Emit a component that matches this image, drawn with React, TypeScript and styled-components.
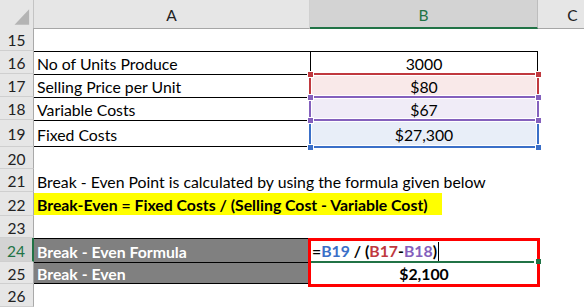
import styled, { createGlobalStyle } from 'styled-components'

const green = '#217346'
const cols = '34px 276px 228px 70px'

function App() {
  return (
    <>
      <Global />
      <Sheet>
        <Row $h={28}>
          <Corner>
            <svg width="34" height="28" viewBox="0 0 34 28">
              <polygon points="30,9 30,25 15,25" fill="#b4b4b4" />
            </svg>
          </Corner>
          <ColHead>A</ColHead>
          <ColHead $active>B</ColHead>
          <ColHead>C</ColHead>
        </Row>

        <Row $h={23}>
          <RowHead>15</RowHead>
          <Cell />
          <Cell />
          <Cell />
        </Row>

        <Row $h={23}>
          <RowHead>16</RowHead>
          <Cell $top>No of Units Produce</Cell>
          <Cell $top $left $right $center>3000</Cell>
          <Cell />
        </Row>

        <Row $h={23}>
          <RowHead>17</RowHead>
          <Cell $top>Selling Price per Unit</Cell>
          <Cell $center>
            <RefBox $color="#c0393f" $tint="#f9e9e9" $z={1}>
              <Handle $pos="tl" $color="#c0393f" />
              <Handle $pos="tr" $color="#c0393f" />
            </RefBox>
            <CellText>$80</CellText>
          </Cell>
          <Cell />
        </Row>

        <Row $h={23}>
          <RowHead>18</RowHead>
          <Cell $top>Variable Costs</Cell>
          <Cell $center>
            <RefBox $color="#8460bd" $tint="#f0ecf7" $z={3}>
              <Handle $pos="tl" $color="#8460bd" />
              <Handle $pos="tr" $color="#8460bd" />
              <Handle $pos="bl" $color="#8460bd" />
              <Handle $pos="br" $color="#8460bd" />
            </RefBox>
            <CellText>$67</CellText>
          </Cell>
          <Cell />
        </Row>

        <Row $h={27}>
          <RowHead>19</RowHead>
          <Cell $top $bottom>Fixed Costs</Cell>
          <Cell $center>
            <RefBox $color="#3a6fc8" $tint="#e8eef8" $z={2}>
              <Handle $pos="bl" $color="#3a6fc8" />
              <Handle $pos="br" $color="#3a6fc8" />
            </RefBox>
            <CellText>$27,300</CellText>
          </Cell>
          <Cell />
        </Row>

        <Row $h={22}>
          <RowHead>20</RowHead>
          <Cell />
          <Cell />
          <Cell />
        </Row>

        <Row $h={23}>
          <RowHead>21</RowHead>
          <Cell>Break - Even Point is calculated by using the formula given below</Cell>
          <Cell />
          <Cell />
        </Row>

        <Row $h={24}>
          <RowHead>22</RowHead>
          <Cell $flush>
            <Highlight>Break-Even = Fixed Costs / (Selling Cost - Variable Cost)</Highlight>
          </Cell>
          <Cell />
          <Cell />
        </Row>

        <Row $h={22}>
          <RowHead>23</RowHead>
          <Cell />
          <Cell />
          <Cell />
        </Row>

        <Row $h={24}>
          <RowHead $active>24</RowHead>
          <Cell $top $fill="#808080" $light $bold>Break - Even Formula</Cell>
          <Cell $bold>
            <Formula>
              =<Ref $color="#3a6fc8">B19</Ref> / (<Ref $color="#c0393f">B17</Ref>-<Ref $color="#8460bd">B18</Ref>)
              <Caret />
            </Formula>
            <ActiveEdge />
            <FillHandle />
            <Outline />
          </Cell>
          <Cell />
        </Row>

        <Row $h={22}>
          <RowHead>25</RowHead>
          <Cell $top $bottom $fill="#808080" $light $bold>Break - Even</Cell>
          <Cell $center $bold>$2,100</Cell>
          <Cell />
        </Row>

        <Row $h={23}>
          <RowHead>26</RowHead>
          <Cell />
          <Cell />
          <Cell />
        </Row>
      </Sheet>
    </>
  )
}

const Global = createGlobalStyle`
  html, body { margin: 0; padding: 0; background: #fff; overflow: hidden; }
  * { box-sizing: border-box; }
`

const Sheet = styled.div`
  display: flex;
  flex-direction: column;
  width: 584px;
  height: 307px;
  overflow: hidden;
  font-family: Lato, "Liberation Sans", sans-serif;
  font-size: 15.8px;
  color: #000;
`
const Row = styled.div<{ $h: number }>`
  display: grid;
  grid-template-columns: ${cols};
  height: ${p => p.$h}px;
  flex: none;
`
const Corner = styled.div`
  background: #e6e6e6;
  border-right: 1px solid #c4c4c4;
  border-bottom: 1px solid #a6a6a6;
  display: flex;
`
const ColHead = styled.div<{ $active?: boolean }>`
  display: flex;
  align-items: center;
  justify-content: center;
  padding-top: 2px;
  background: ${p => p.$active ? '#d3d3d3' : '#e6e6e6'};
  color: ${p => p.$active ? green : '#222'};
  border-right: 1px solid ${p => p.$active ? '#bdbdbd' : '#d0d0d0'};
  border-bottom: ${p => p.$active ? `2px solid ${green}` : '1px solid #a6a6a6'};
  font-size: 15.5px;
`
const RowHead = styled.div<{ $active?: boolean }>`
  display: flex;
  align-items: center;
  justify-content: center;
  padding-top: 2px;
  background: ${p => p.$active ? '#d3d3d3' : '#e6e6e6'};
  color: ${p => p.$active ? green : '#222'};
  border-right: ${p => p.$active ? `2px solid ${green}` : '1px solid #a9a9a9'};
  border-bottom: 1px solid #cfcfcf;
  font-size: 15.5px;
`
const Cell = styled.div<{
  $top?: boolean
  $bottom?: boolean
  $left?: boolean
  $right?: boolean
  $center?: boolean
  $bold?: boolean
  $light?: boolean
  $flush?: boolean
  $fill?: string
}>`
  position: relative;
  display: flex;
  justify-content: ${p => p.$center ? 'center' : 'flex-start'};
  padding: ${p => p.$flush ? '0' : '2px 3px 0'};
  align-items: ${p => p.$flush ? 'flex-end' : 'center'};
  border-top: ${p => p.$top ? '1px solid #000' : 'none'};
  border-bottom: ${p => p.$bottom ? '1px solid #000' : 'none'};
  border-left: ${p => p.$left ? '1px solid #000' : 'none'};
  border-right: ${p => p.$right ? '1px solid #000' : 'none'};
  background: ${p => p.$fill || 'transparent'};
  color: ${p => p.$light ? '#fff' : '#000'};
  font-weight: ${p => p.$bold ? 700 : 400};
  white-space: nowrap;
  line-height: 18px;
`
const CellText = styled.span`
  position: relative;
  z-index: 4;
`
const RefBox = styled.div<{ $color: string; $tint: string; $z: number }>`
  position: absolute;
  top: -1px;
  left: -1px;
  right: -1px;
  bottom: -1px;
  border: 2px solid ${p => p.$color};
  background: ${p => p.$tint};
  box-shadow: inset 0 0 0 1px #fff;
  z-index: ${p => p.$z};
`
const Handle = styled.div<{ $pos: 'tl' | 'tr' | 'bl' | 'br'; $color: string }>`
  position: absolute;
  width: 7px;
  height: 7px;
  background: ${p => p.$color};
  border: 1px solid #fff;
  ${p => p.$pos[0] === 't' ? 'top: -4.5px;' : 'bottom: -4.5px;'}
  ${p => p.$pos[1] === 'l' ? 'left: -4.5px;' : 'right: -4.5px;'}
`
const Highlight = styled.span`
  display: flex;
  align-items: center;
  height: 22px;
  margin-bottom: 1px;
  padding: 2px 14px 0 3px;
  background: #ffff00;
  font-weight: 700;
`
const Formula = styled.span`
  display: flex;
  align-items: center;
  margin-left: -1px;
  white-space: pre;
`
const Ref = styled.span<{ $color: string }>`
  color: ${p => p.$color};
`
const Caret = styled.span`
  display: inline-block;
  width: 1px;
  height: 19px;
  margin-left: 1px;
  background: #000;
`
const ActiveEdge = styled.div`
  position: absolute;
  left: 0;
  right: 4px;
  bottom: -1px;
  height: 2px;
  background: ${green};
`
const FillHandle = styled.div`
  position: absolute;
  right: -3px;
  bottom: -2px;
  width: 5px;
  height: 5px;
  background: ${green};
  z-index: 6;
`
const Outline = styled.div`
  position: absolute;
  top: 0;
  left: -2px;
  right: -2px;
  height: 49px;
  border: 3px solid #ff0000;
  z-index: 5;
  pointer-events: none;
`

export default App
